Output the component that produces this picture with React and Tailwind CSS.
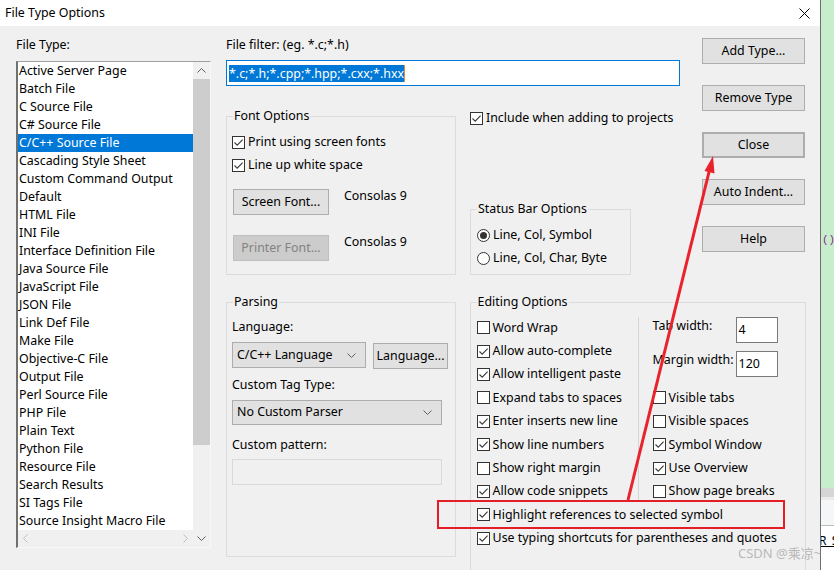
import React from "react";

const fileTypes = [
  "Active Server Page",
  "Batch File",
  "C Source File",
  "C# Source File",
  "C/C++ Source File",
  "Cascading Style Sheet",
  "Custom Command Output",
  "Default",
  "HTML File",
  "INI File",
  "Interface Definition File",
  "Java Source File",
  "JavaScript File",
  "JSON File",
  "Link Def File",
  "Make File",
  "Objective-C File",
  "Output File",
  "Perl Source File",
  "PHP File",
  "Plain Text",
  "Python File",
  "Resource File",
  "Search Results",
  "SI Tags File",
  "Source Insight Macro File",
];

const editLeft = [
  ["Word Wrap", false],
  ["Allow auto-complete", true],
  ["Allow intelligent paste", true],
  ["Expand tabs to spaces", false],
  ["Enter inserts new line", true],
  ["Show line numbers", true],
  ["Show right margin", false],
  ["Allow code snippets", true],
];

const editRight = [
  ["Visible tabs", false],
  ["Visible spaces", false],
  ["Symbol Window", true],
  ["Use Overview", true],
  ["Show page breaks", false],
];

const Box = ({ checked }) => (
  <span className="flex h-[13px] w-[13px] shrink-0 items-center justify-center border border-[#333333] bg-white">
    {checked && (
      <svg width="11" height="11" viewBox="0 0 11 11">
        <path d="M1.5 5.5 L4.2 8.2 L9.6 2.6" fill="none" stroke="#3a3a3a" strokeWidth="1.1" />
      </svg>
    )}
  </span>
);

const Check = ({ label, checked, className = "" }) => (
  <div className={`flex items-center gap-[3px] ${className}`}>
    <Box checked={checked} />
    <span className="leading-4 whitespace-nowrap">{label}</span>
  </div>
);

const Radio = ({ label, checked }) => (
  <div className="flex h-[18px] items-center gap-[3px]">
    <span className="flex h-[13px] w-[13px] items-center justify-center rounded-full border border-[#333333] bg-white">
      {checked && <span className="h-[7px] w-[7px] rounded-full bg-[#333333]" />}
    </span>
    <span className="leading-4 whitespace-nowrap">{label}</span>
  </div>
);

const Button = ({ children, className = "", disabled }) => (
  <div
    className={`flex h-[26px] items-center justify-center border whitespace-nowrap ${
      disabled ? "border-[#bfbfbf] bg-[#cccccc] text-[#838383]" : "border-[#adadad] bg-[#e1e1e1]"
    } ${className}`}
  >
    {children}
  </div>
);

const Chevron = () => (
  <svg width="9" height="5" viewBox="0 0 9 5">
    <path d="M0.5 0.5 L4.5 4.5 L8.5 0.5" fill="none" stroke="#606060" strokeWidth="1" />
  </svg>
);

const Select = ({ value, className = "" }) => (
  <div className={`flex items-center justify-between border border-[#adadad] bg-[#e1e1e1] pl-[4px] pr-[9px] ${className}`}>
    <span className="whitespace-nowrap">{value}</span>
    <Chevron />
  </div>
);

// legend sits at the fieldset's content start, so padding goes on an inner div
const Group = ({ title, className = "", inner = "", children }) => (
  <fieldset className={`border border-[#dcdcdc] ${className}`}>
    <legend className="ml-[6px] px-[1px] leading-4 whitespace-nowrap">{title}</legend>
    <div className={inner}>{children}</div>
  </fieldset>
);

const FileList = () => (
  <div className="mt-2 flex h-[487px] border-t border-r border-b border-l-2 border-t-[#a0a0a0] border-l-[#707070] border-r-[#f8f8f8] border-b-[#f8f8f8]">
    <div className="flex w-[175px] flex-col">
      <div className="h-[468px] overflow-hidden bg-white">
        {fileTypes.map((name, i) => (
          <div
            key={name}
            className={`h-[18px] pl-[1px] leading-[18px] whitespace-nowrap ${i === 4 ? "bg-[#0078d7] text-white" : ""}`}
          >
            {name}
          </div>
        ))}
      </div>
      <div className="flex h-[17px] items-center justify-between bg-[#f0f0f0] px-[5px]">
        <svg width="5" height="9" viewBox="0 0 5 9">
          <path d="M4.5 0.5 L0.5 4.5 L4.5 8.5" fill="none" stroke="#c0c0c0" />
        </svg>
        <svg width="5" height="9" viewBox="0 0 5 9">
          <path d="M0.5 0.5 L4.5 4.5 L0.5 8.5" fill="none" stroke="#c0c0c0" />
        </svg>
      </div>
    </div>
    <div className="flex w-[17px] flex-col bg-[#f0f0f0]">
      <div className="flex h-[17px] items-center justify-center">
        <svg width="9" height="5" viewBox="0 0 9 5">
          <path d="M0.5 4.5 L4.5 0.5 L8.5 4.5" fill="none" stroke="#606060" />
        </svg>
      </div>
      <div className="h-[366px] bg-[#cdcdcd]" />
      <div className="flex-1" />
      <div className="flex h-[17px] items-center justify-center">
        <Chevron />
      </div>
    </div>
  </div>
);

const App = () => {
  return (
    <div className="flex h-[570px] w-[834px] overflow-hidden font-['Noto_Sans','Noto_Sans_CJK_SC',sans-serif] text-[12.4px] text-black">
      <div className="relative flex w-[821px] shrink-0 flex-col border-r border-[#6f6f6f] bg-[#f0f0f0]">
        <div className="flex h-[26px] shrink-0 items-center justify-between bg-white pl-[5px] pr-[10px]">
          <span className="text-[12.4px]">File Type Options</span>
          <svg width="11" height="11" viewBox="0 0 11 11">
            <path d="M0.5 0.5 L10.5 10.5 M10.5 0.5 L0.5 10.5" stroke="#000" strokeWidth="1" />
          </svg>
        </div>

        <div className="flex flex-1 pl-4 pt-[11px]">
          <div className="w-[195px] shrink-0">
            <div className="h-4 leading-4">File Type:</div>
            <FileList />
          </div>

          <div className="ml-[15px] flex w-[580px] shrink-0 flex-col">
            <div className="flex items-start">
              <div className="w-[454px]">
                <div className="h-4 leading-4">File filter: (eg. *.c;*.h)</div>
                <div className="mt-[7px] flex h-[26px] items-center border border-[#0078d7] bg-white pl-[2px]">
                  <span className="border-r border-[#e08a3c] bg-[#0078d7] leading-[17px] text-white">
                    *.c;*.h;*.cpp;*.hpp;*.cxx;*.hxx
                  </span>
                </div>
                <div className="mt-[22px] flex items-start">
                  <Group title="Font Options" className="w-[230px]" inner="pb-[13px] pl-[5px]">
                    <Check label="Print using screen fonts" checked className="mt-[9px] h-[18px]" />
                    <Check label="Line up white space" checked className="mt-[5px] h-[18px]" />
                    <div className="mt-[15px] flex items-start">
                      <Button className="ml-[1px] w-[96px]">Screen Font...</Button>
                      <span className="ml-[15px] -mt-[1px] leading-4">Consolas 9</span>
                    </div>
                    <div className="mt-[20px] flex items-start">
                      <Button disabled className="ml-[1px] w-[96px]">Printer Font...</Button>
                      <span className="ml-[15px] -mt-[1px] leading-4">Consolas 9</span>
                    </div>
                  </Group>
                  <div className="ml-[14px] w-[210px]">
                    <Check label="Include when adding to projects" checked className="mt-[2px] h-4" />
                    <Group title="Status Bar Options" className="mt-[75px] w-[161px]" inner="pb-[7px] pl-[6px]">
                      <div className="mt-[9px]">
                        <Radio label="Line, Col, Symbol" checked />
                      </div>
                      <div className="mt-[5px]">
                        <Radio label="Line, Col, Char, Byte" />
                      </div>
                    </Group>
                  </div>
                </div>
              </div>

              <div className="ml-[22px] mt-[1px] flex w-[103px] flex-col gap-[21px]">
                <Button>Add Type...</Button>
                <Button>Remove Type</Button>
                <Button className="border-2 border-[#0078d7]">Close</Button>
                <Button>Auto Indent...</Button>
                <Button>Help</Button>
              </div>
            </div>

            <div className="mt-[19px] flex items-start">
              <Group title="Parsing" className="w-[230px]" inner="pb-[71px] pl-[5px]">
                <div className="mt-[9px] h-4 leading-4">Language:</div>
                <div className="mt-[7px] flex items-start">
                  <Select value="C/C++ Language" className="h-[26px] w-[134px]" />
                  <Button className="ml-[7px] mt-[1px] w-[75px]">Language...</Button>
                </div>
                <div className="mt-[8px] h-4 leading-4">Custom Tag Type:</div>
                <Select value="No Custom Parser" className="mt-[7px] h-[25px] w-[210px]" />
                <div className="mt-[12px] h-4 leading-4">Custom pattern:</div>
                <div className="mt-[6px] h-[26px] w-[210px] border border-[#d9d9d9] bg-[#f0f0f0]" />
              </Group>

              <Group title="Editing Options" className="ml-[14px] w-[337px]" inner="pb-[40px]">
                <div className="mt-[6px] flex">
                  <div className="w-[167px] pl-[6px]">
                    {editLeft.map(([label, checked]) => (
                      <Check key={label} label={label} checked={checked} className="h-[23.4px]" />
                    ))}
                  </div>
                  <div className="mt-[1px] h-[183px] w-px bg-[#d5d5d5]" />
                  <div className="pl-[14px]">
                    <div className="mt-[1px] flex h-[26px] items-start">
                      <span className="w-[83px] pt-[1px] leading-4 whitespace-nowrap">Tab width:</span>
                      <div className="h-[26px] w-[42px] border border-[#7a7a7a] bg-white pl-[2px] leading-[24px]">4</div>
                    </div>
                    <div className="mt-[8px] flex h-[26px] items-start">
                      <span className="w-[83px] pt-[1px] leading-4 whitespace-nowrap">Margin width:</span>
                      <div className="h-[26px] w-[42px] border border-[#7a7a7a] bg-white pl-[2px] leading-[24px]">120</div>
                    </div>
                    <div className="mt-[9.2px]">
                      {editRight.map(([label, checked]) => (
                        <Check key={label} label={label} checked={checked} className="h-[23.4px]" />
                      ))}
                    </div>
                  </div>
                </div>
                <div className="pl-[6px]">
                  <Check label="Highlight references to selected symbol" checked className="h-[23.4px]" />
                  <Check label="Use typing shortcuts for parentheses and quotes" checked className="h-[23.4px]" />
                </div>
              </Group>
            </div>
          </div>
        </div>

        <div className="absolute left-[437px] top-[500px] h-[29px] w-[348px] border-2 border-[#e41e26]" />
        <svg className="pointer-events-none absolute left-0 top-0" width="821" height="570">
          <line x1="628" y1="500" x2="710" y2="168" stroke="#e8232b" strokeWidth="3" />
          <polygon points="713,156 704.5,171 714.5,173.5" fill="#e8232b" />
        </svg>
        <div className="absolute left-[738px] top-[545px] text-[13px] leading-4 whitespace-nowrap text-[#a8a8a8]/80">
          CSDN @乘凉~
        </div>
      </div>

      <div className="flex flex-1 flex-col">
        <div className="h-[488px] bg-[#c7edcc] pl-[1px] pt-[232px] font-['Liberation_Mono',monospace] text-[11px] leading-4 text-[#8a1e8a]">
          ()
        </div>
        <div className="h-[9px] bg-[#d6d6d6]" />
        <div className="h-[3px] bg-[#ebebeb]" />
        <div className="h-[26px] border-b border-[#bdbdbd] bg-[#f5f6f8]" />
        <div className="flex-1 bg-white pt-[7px] text-[12px] leading-4 whitespace-nowrap">
          <span className="-ml-[2px] underline">R_S</span>
        </div>
      </div>
    </div>
  );
};

export default App;
